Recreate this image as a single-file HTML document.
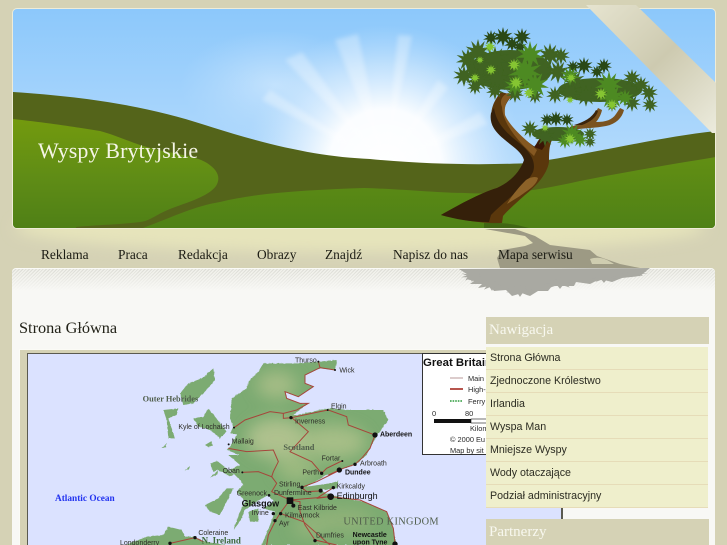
<!DOCTYPE html>
<html lang="pl"><head><meta charset="utf-8"><title>Wyspy Brytyjskie</title>
<style>
html,body{margin:0;padding:0;width:727px;height:545px;overflow:hidden;background:#d5d2b5}
body{position:relative;font-family:"Liberation Serif",serif}
svg{position:absolute;left:0;top:0;display:block}
.n,.t{position:absolute;white-space:nowrap}
.n{top:246px;font-size:13.4px;line-height:17px;color:#1c1c14}
#panel{position:absolute;left:12px;top:268px;width:703px;height:290px;background:#f8f8f5;border-radius:4px 4px 0 0;border-top:1px solid #fafaf6;box-sizing:border-box}
#hatch{position:absolute;left:0;top:0;right:0;height:22px;border-radius:4px 4px 0 0;background:linear-gradient(#f8f8f500,#f8f8f5),repeating-linear-gradient(135deg,#dcdcd5 0 1px,#f0f0ea 1px 2.4px)}
.h{position:absolute;left:486px;width:223px;background:#d5d2b5;color:#f8f8ef;font-size:15px;box-sizing:border-box;padding-left:3px}
#menu{position:absolute;left:486px;top:347px;width:222px;margin:0;padding:0;list-style:none}
#menu li{height:22px;border-bottom:1px solid #e6dcb8;background:#efefcc;font:10.67px/22px "Liberation Sans",sans-serif;color:#2c2c22;padding-left:4px}
</style></head><body>

<svg width="727" height="545" viewBox="0 0 727 545">
<defs>
<linearGradient id="sky" x1="0" y1="0" x2="0" y2="1"><stop offset="0" stop-color="#8cc8fb"/><stop offset="1" stop-color="#c4e2fd"/></linearGradient>
<linearGradient id="gr1" x1="0" y1="0" x2="0" y2="1"><stop offset="0" stop-color="#739a0e"/><stop offset=".55" stop-color="#5f8c16"/><stop offset="1" stop-color="#4f8016"/></linearGradient>
<linearGradient id="gr2" gradientUnits="userSpaceOnUse" x1="0" y1="157" x2="0" y2="228"><stop offset="0" stop-color="#628f14"/><stop offset="1" stop-color="#4f8116"/></linearGradient>
<linearGradient id="rib" x1="0" y1="0" x2="1" y2="1"><stop offset="0" stop-color="#e6e4d0"/><stop offset=".5" stop-color="#cdcab0"/><stop offset="1" stop-color="#ecebdd"/></linearGradient>
<radialGradient id="sun" gradientUnits="userSpaceOnUse" cx="385" cy="165" r="140"><stop offset="0" stop-color="#fff"/><stop offset=".4" stop-color="#fff" stop-opacity=".95"/><stop offset=".72" stop-color="#e4f2fe" stop-opacity=".5"/><stop offset="1" stop-color="#c8e4fd" stop-opacity="0"/></radialGradient>
<radialGradient id="haze"><stop offset="0" stop-color="#cfe8fe" stop-opacity=".75"/><stop offset="1" stop-color="#c0e0fd" stop-opacity="0"/></radialGradient>
<filter id="b2" x="-20%" y="-20%" width="140%" height="140%"><feGaussianBlur stdDeviation="2.2"/></filter>
<filter id="b8" x="-20%" y="-80%" width="140%" height="260%"><feGaussianBlur stdDeviation="7"/></filter>
<filter id="soft"><feGaussianBlur stdDeviation=".35"/></filter>
<clipPath id="bn"><rect x="13" y="9" width="702" height="219" rx="4"/></clipPath>
<polygon id="s" points="0,-1 .14,-.45 .52,-.85 .36,-.3 .95,-.42 .48,-.06 1,.2 .42,.2 .62,.78 .18,.38 0,.98 -.18,.38 -.62,.78 -.42,.2 -1,.2 -.48,-.06 -.95,-.42 -.36,-.3 -.52,-.85 -.14,-.45"/>
</defs>

<rect width="727" height="545" fill="#d5d2b5"/>
<ellipse cx="360" cy="228" rx="345" ry="24" fill="#e6e4bb" filter="url(#b8)"/>

<!-- banner -->
<rect x="12" y="8" width="704" height="221" rx="5" fill="#eeecd8"/>
<g clip-path="url(#bn)">
<rect x="13" y="9" width="702" height="219" fill="url(#sky)"/>
<ellipse cx="275" cy="85" rx="95" ry="55" fill="url(#haze)"/>
<circle cx="385" cy="165" r="140" fill="url(#sun)"/>
<g fill="#fff" opacity=".3" filter="url(#b2)">
<polygon points="385,165 285,60 302,52"/><polygon points="385,165 335,40 358,34"/><polygon points="385,165 398,35 412,36"/><polygon points="385,165 438,80 448,88"/><polygon points="385,165 480,112 488,124"/><polygon points="385,165 262,100 270,90"/>
</g>
<path d="M13 92C90 97 150 107 205 125C270 146 320 157 370 159C430 165 490 165 530 163C600 152 660 137 716 131V228H13Z" fill="#54641a"/>
<path d="M143 228C175 216 195 206 220 202C262 192 310 190 364 188C400 189 440 193 465 193C510 195 540 190 580 181C630 171 680 163 716 157V228Z" fill="url(#gr2)"/>
<path d="M13 119C50 123 75 127 100 131C115 135 125 140 140 145C165 153 195 155 207 163C218 170 221 178 216 186C208 197 185 203 170 209C155 215 150 221 140 222C115 225 95 225 76 227V228H13Z" fill="url(#gr1)"/>

<!-- trunk -->
<path d="M441 215C455 207 480 193 497 188C510 182 524 172 529 160C528 154 526 152 522 149C510 140 498 132 493 122C488 110 496 98 501 92L513 95C506 102 502 110 505 118C510 128 525 140 535 147C537 142 539 139 541 137L552 140C549 146 549 154 549 162C547 175 535 187 525 195C515 204 507 211 503 216L502 223C490 224 470 222 441 215Z" fill="#5a370c"/>
<path d="M441 215C455 207 480 193 497 188C510 182 520 172 524 160C522 152 512 146 505 140C495 132 489 124 491 113L494 108C496 122 505 132 518 142C528 150 537 160 533 172C525 188 505 200 491 215L489 222C470 222 455 219 441 215Z" fill="#35200a"/>
<path d="M502 107C499 100 503 95 508 93L513 95C507 100 504 105 505 115C510 127 526 140 537 150L534 156C520 143 503 125 502 107Z" fill="#855821"/>
<path d="M507 204C512 195 520 186 526 180C530 177 536 176 538 178C536 186 528 190 520 196Z" fill="#8c6228"/>
<path d="M534 147L541 138L548 141L542 150Z" fill="#3a1606"/>
<path d="M570 127C580 124 590 120 594 116C596 112 597 110 598 108L602 110C601 115 598 120 596 122C606 122 612 120 616 114L620 108L624 110C622 118 616 124 606 126C596 128 585 128 570 130Z" fill="#7a5320"/>
<path d="M574 125C584 122 592 118 596 110L598 111C596 118 590 122 582 125Z" fill="#3c250c"/>

<!-- foliage -->
<g filter="url(#soft)">
<g fill="#2c4a15">
<use href="#s" transform="translate(491,38) scale(8)"/><use href="#s" transform="translate(503,37) scale(10)"/><use href="#s" transform="translate(512,44) scale(8)"/><use href="#s" transform="translate(522,37) scale(9)"/><use href="#s" transform="translate(520,47) scale(7)"/>
<use href="#s" transform="translate(573,67) scale(7)"/><use href="#s" transform="translate(584,66) scale(9)"/><use href="#s" transform="translate(597,72) scale(7)"/><use href="#s" transform="translate(604,66) scale(8)"/>
<use href="#s" transform="translate(547,120) scale(7)"/><use href="#s" transform="translate(556,119) scale(8)"/><use href="#s" transform="translate(567,120) scale(7)"/>
</g>
<g fill="#3f6320">
<ellipse cx="510" cy="70" rx="42" ry="20"/><ellipse cx="600" cy="90" rx="42" ry="12"/><ellipse cx="558" cy="134" rx="26" ry="7"/>
<use href="#s" transform="translate(468,60) scale(12)"/><use href="#s" transform="translate(478,52) scale(13)"/><use href="#s" transform="translate(464,76) scale(11)"/><use href="#s" transform="translate(478,80) scale(12)"/><use href="#s" transform="translate(495,60) scale(14)"/><use href="#s" transform="translate(497,80) scale(13)"/>
<use href="#s" transform="translate(550,55) scale(12)"/><use href="#s" transform="translate(561,56) scale(9)"/><use href="#s" transform="translate(558,72) scale(12)"/><use href="#s" transform="translate(475,87) scale(8)"/><use href="#s" transform="translate(495,91) scale(9)"/><use href="#s" transform="translate(515,94) scale(9)"/><use href="#s" transform="translate(535,96) scale(8)"/><use href="#s" transform="translate(555,95) scale(9)"/>
<use href="#s" transform="translate(570,92) scale(11)"/><use href="#s" transform="translate(586,96) scale(11)"/><use href="#s" transform="translate(575,80) scale(10)"/><use href="#s" transform="translate(632,78) scale(9)"/><use href="#s" transform="translate(641,85) scale(9)"/><use href="#s" transform="translate(649,93) scale(9)"/><use href="#s" transform="translate(650,105) scale(8)"/><use href="#s" transform="translate(632,103) scale(9)"/><use href="#s" transform="translate(612,106) scale(6)"/>
<use href="#s" transform="translate(530,129) scale(9)"/><use href="#s" transform="translate(545,137) scale(10)"/><use href="#s" transform="translate(590,134) scale(7)"/><use href="#s" transform="translate(590,142) scale(6)"/>
</g>
<g fill="#4e8a23">
<use href="#s" transform="translate(530,55) scale(14)"/><use href="#s" transform="translate(525,72) scale(17)"/><use href="#s" transform="translate(535,85) scale(14)"/><use href="#s" transform="translate(515,86) scale(11)"/>
<use href="#s" transform="translate(570,76) scale(10)"/><use href="#s" transform="translate(609,85) scale(14)"/><use href="#s" transform="translate(612,97) scale(13)"/><use href="#s" transform="translate(625,98) scale(9)"/>
<use href="#s" transform="translate(572,134) scale(11)"/><use href="#s" transform="translate(565,141) scale(8)"/><use href="#s" transform="translate(580,140) scale(8)"/>
</g>
<g fill="#85c531">
<use href="#s" transform="translate(490,47) scale(6)"/><use href="#s" transform="translate(480,60) scale(4)"/><use href="#s" transform="translate(514,65) scale(6.5)"/><use href="#s" transform="translate(516,83) scale(7)"/><use href="#s" transform="translate(529,93) scale(6)"/><use href="#s" transform="translate(491,70) scale(5.5)"/><use href="#s" transform="translate(475,78) scale(5)"/>
<use href="#s" transform="translate(601,94) scale(6.5)"/><use href="#s" transform="translate(612,105) scale(6)"/><use href="#s" transform="translate(570,139) scale(6)"/><use href="#s" transform="translate(545,128) scale(4)"/><use href="#s" transform="translate(571,78) scale(5)"/><use href="#s" transform="translate(570,100) scale(4)"/>
</g>
</g>
<path d="M484 223C510 222 525 226 540 232H484Z" fill="#3a5a12" opacity=".7"/>
</g>
<!-- ribbon -->
<path d="M586 5H636L716 83V133L712 133Z" fill="url(#rib)"/>

<!-- tree shadow on page -->
<path d="M485 229H515L535 236L550 245L590 250L597 256L620 264L640 268H500L497 258L502 250L525 246L533 243L525 236Z" fill="#9d9a84"/>
<path d="M590 259C600 256 606 259 614 264H592Z" fill="#cfcdb0"/>
</svg>

<div class="n" style="left:41px">Reklama</div>
<div class="n" style="left:118px">Praca</div>
<div class="n" style="left:178px">Redakcja</div>
<div class="n" style="left:257px">Obrazy</div>
<div class="n" style="left:325px">Znajdź</div>
<div class="n" style="left:393px">Napisz do nas</div>
<div class="n" style="left:498px">Mapa serwisu</div>
<div class="t" style="left:38px;top:137px;font-size:22px;line-height:27px;color:#f5f5e6;letter-spacing:.13px">Wyspy Brytyjskie</div>

<div id="panel"><div id="hatch"></div></div>

<svg width="727" height="545" viewBox="0 0 727 545">
<defs>
<filter id="rough" x="-5%" y="-5%" width="110%" height="110%"><feTurbulence type="fractalNoise" baseFrequency=".12" numOctaves="2" seed="4" result="n"/><feDisplacementMap in="SourceGraphic" in2="n" scale="5" xChannelSelector="R" yChannelSelector="G"/><feGaussianBlur stdDeviation=".35"/></filter>
<filter id="bl" x="-30%" y="-30%" width="160%" height="160%"><feGaussianBlur stdDeviation="24"/></filter>
<filter id="sf"><feGaussianBlur stdDeviation=".6"/></filter>
<clipPath id="sc"><path id="scot" d="M385 50L400 25L440 25L500 25L565 20L620 15L615 45L570 40L525 60L525 85L550 95L505 125L465 110L470 130L510 145L535 145L490 180L500 180L570 165L600 160L660 165L760 165L775 195L745 235L725 270L710 300L675 330L640 340L590 360L530 395L600 385L625 378L620 400L570 405L600 420L700 440L770 470L790 520L800 570L395 570L420 510L435 470L400 460L430 440L415 420L380 440L345 465L330 500L310 525L330 470L345 440L320 410L340 390L325 370L300 345L330 330L295 300L330 300L290 285L300 275L320 240L300 235L310 215L300 190L305 130L350 100L355 80Z"/></clipPath>
</defs>
<!-- foliage shadow -->
<g fill="#a9a9a2">
<polygon points="459,269 650,268 640,276 622,278 612,282 600,279 590,284 576,282 574,286 552,286 548,291 538,291 530,296 522,293 512,296 506,290 494,291 490,286 478,288 482,284 470,284 474,281 466,279 470,276"/>
<use href="#s" transform="translate(472,276) scale(11,6)"/><use href="#s" transform="translate(492,285) scale(13,6)"/><use href="#s" transform="translate(520,291) scale(14,6)"/><use href="#s" transform="translate(560,283) scale(16,6)"/><use href="#s" transform="translate(604,278) scale(14,5)"/><use href="#s" transform="translate(635,273) scale(13,4)"/>
</g>
<!-- frame -->
<rect x="19" y="349" width="467" height="196" fill="#fbfbf6"/>
<rect x="20" y="350" width="466" height="195" fill="#d5d2b5"/>
<rect x="27" y="353" width="536" height="192" fill="#5a5a50"/>
<rect x="28" y="354" width="533" height="191" fill="#dbe2ff"/>
<g transform="translate(130 355) scale(.33333)">
<g filter="url(#rough)" fill="#7cab72">
<path d="M150 115L175 85L215 70L250 40L255 75L225 110L190 145L160 150Z"/>
<path d="M100 165L145 160L140 180L115 190L135 250L115 250L110 195Z"/>
<path d="M190 190L220 185L235 160L255 185L290 230L270 250L240 225L205 215Z"/>
<path d="M95 280L110 265L108 276Z"/>
<path d="M225 270L245 258L247 272L235 276Z"/>
<path d="M240 325L262 318L312 358L300 364L265 345L250 350Z"/>
<path d="M163 347L180 335L178 342Z"/><path d="M240 368L265 345L262 358Z"/>
<path d="M225 450L265 430L290 400L310 400L290 440L270 480L240 470Z"/>
<path d="M355 470L385 460L385 500L360 500Z"/>
<path d="M-30 580L0 565L50 545L100 540L115 515L155 525L165 545L195 545L225 560L345 580Z"/>
<use href="#scot"/>
</g>
<g clip-path="url(#sc)"><g filter="url(#bl)" opacity=".7">
<ellipse cx="440" cy="90" rx="60" ry="40" fill="#b7c48f"/>
<ellipse cx="440" cy="250" rx="90" ry="60" fill="#c4cb9a"/>
<ellipse cx="610" cy="260" rx="100" ry="50" fill="#b8c690"/>
<ellipse cx="500" cy="340" rx="60" ry="40" fill="#a9bf85"/>
<ellipse cx="640" cy="495" rx="90" ry="35" fill="#9ab57c"/>
<ellipse cx="540" cy="515" rx="50" ry="30" fill="#a0b980"/>
</g></g>
<g fill="none" stroke="#a6453a" stroke-width="3" filter="url(#sf)">
<path d="M565 20L570 38L615 45M570 38L525 60L525 85L550 95L505 125L465 110L470 130L510 145L535 145L500 165L460 175L460 190L485 188L570 170L595 165L650 185L655 210L735 240L720 280L695 310L675 328L640 340L595 360"/>
<path d="M460 175L420 170L345 195L312 218"/>
<path d="M485 188L535 230L480 290L545 320L575 355L590 340L635 318"/>
<path d="M295 280L350 290L430 285L445 320L430 350L425 365L385 350L335 352"/>
<path d="M425 365L440 385L425 410L480 435"/>
<path d="M515 397L560 380L630 345M515 397L530 410L570 408M610 398L560 430L600 425"/>
<path d="M480 435L600 425L690 435L770 470L790 520L795 565"/>
<path d="M480 435L510 440L510 470L525 510L555 555L620 570M480 435L450 475L435 500L415 540L410 570M450 475L520 500L600 570"/>
<path d="M120 565L195 548L220 560"/>
</g>
<g fill="#111">
<circle cx="565" cy="20" r="3"/><circle cx="615" cy="45" r="3"/><circle cx="593" cy="165" r="3"/><circle cx="483" cy="188" r="5"/><circle cx="735" cy="240" r="8"/><circle cx="637" cy="318" r="3"/><circle cx="675" cy="328" r="5"/><circle cx="575" cy="355" r="5"/><circle cx="628" cy="345" r="8"/><circle cx="516" cy="397" r="5"/><circle cx="610" cy="398" r="5"/><circle cx="572" cy="407" r="6"/><circle cx="602" cy="425" r="10"/><circle cx="490" cy="452" r="6"/><circle cx="417" cy="421" r="4"/><circle cx="430" cy="476" r="5"/><circle cx="452" cy="476" r="5"/><circle cx="435" cy="497" r="5"/><circle cx="555" cy="557" r="5"/><circle cx="795" cy="567" r="8"/><circle cx="337" cy="352" r="3"/><circle cx="296" cy="268" r="3"/><circle cx="312" cy="218" r="3"/><circle cx="195" cy="548" r="5"/><circle cx="120" cy="565" r="5"/>
<rect x="470" y="427" width="20" height="20"/>
</g>
<g font-family="Liberation Sans,sans-serif" font-size="21" fill="#2e2e28">
<text x="495" y="23">Thurso</text><text x="628" y="52">Wick</text><text x="603" y="160">Elgin</text><text x="495" y="205">Inverness</text><text x="575" y="317">Fortar</text><text x="690" y="332">Arbroath</text><text x="517" y="358">Perth</text><text x="447" y="395">Stirling</text><text x="620" y="400">Kirkcaldy</text><text x="432" y="420">Dunfermline</text><text x="320" y="422">Greenock</text><text x="503" y="465">East Kilbride</text><text x="365" y="480">Irvine</text><text x="465" y="487">Kilmarnock</text><text x="447" y="512">Ayr</text><text x="558" y="547">Dumfries</text><text x="145" y="222">Kyle of Lochalsh</text><text x="305" y="266">Mallaig</text><text x="278" y="354">Oban</text><text x="205" y="540">Coleraine</text><text x="-30" y="570">Londonderry</text>
<g font-weight="bold" fill="#111"><text x="750" y="245">Aberdeen</text><text x="645" y="358">Dundee</text><text x="668" y="546">Newcastle</text><text x="668" y="568">upon Tyne</text></g>
<g font-size="27" fill="#111"><text x="620" y="432">Edinburgh</text><text x="335" y="455" font-weight="bold">Glasgow</text></g>
</g>
<g font-family="Liberation Serif,serif" font-weight="bold" fill="#505e4c">
<text x="38" y="140" font-size="25">Outer Hebrides</text><text x="460" y="285" font-size="25">Scotland</text>
<text x="640" y="508" font-size="31" font-weight="normal" letter-spacing="1">UNITED KINGDOM</text>
<text x="215" y="566" font-size="27" fill="#3d6a3c">N. Ireland</text>
</g>
</g>
<text x="55" y="501" font-family="Liberation Serif,serif" font-weight="bold" font-size="9.3" fill="#2233f0">Atlantic Ocean</text>
<!-- legend -->
<rect x="422.500" y="353.500" width="80" height="101" fill="#fff" stroke="#333"/>
<g font-family="Liberation Sans,sans-serif" fill="#2a2a2a" font-size="7.4">
<text x="423" y="366" font-size="11.400" font-weight="bold" fill="#111">Great Britain</text>
<text x="468" y="381">Main</text><text x="468" y="392">High-s</text><text x="468" y="404">Ferry</text>
<text x="432" y="416">0</text><text x="465" y="416">80</text><text x="470" y="431">Kilom</text><text x="450" y="442">© 2000 Eu</text><text x="450" y="453">Map by sit</text>
</g>
<path d="M450 378H463" stroke="#b99a98" stroke-width="1"/><path d="M450 389H463" stroke="#a52a22" stroke-width="1.6"/><path d="M450 401H463" stroke="#2a9a3a" stroke-width="1.4" stroke-dasharray="1.6 1"/>
<rect x="434" y="419" width="37" height="4" fill="#111"/><rect x="471" y="419" width="20" height="4" fill="#fff" stroke="#111" stroke-width=".6"/>
</svg>

<div class="t" style="left:19px;top:318px;font-size:16.3px;line-height:20px;color:#222218">Strona Główna</div>

<div class="h" style="top:317px;height:27px;line-height:27px">Nawigacja</div>
<ul id="menu">
<li>Strona Główna</li>
<li>Zjednoczone Królestwo</li>
<li>Irlandia</li>
<li>Wyspa Man</li>
<li>Mniejsze Wyspy</li>
<li>Wody otaczające</li>
<li>Podział administracyjny</li>
</ul>
<div class="h" style="top:519px;height:30px;line-height:27px">Partnerzy</div>
</body></html>
